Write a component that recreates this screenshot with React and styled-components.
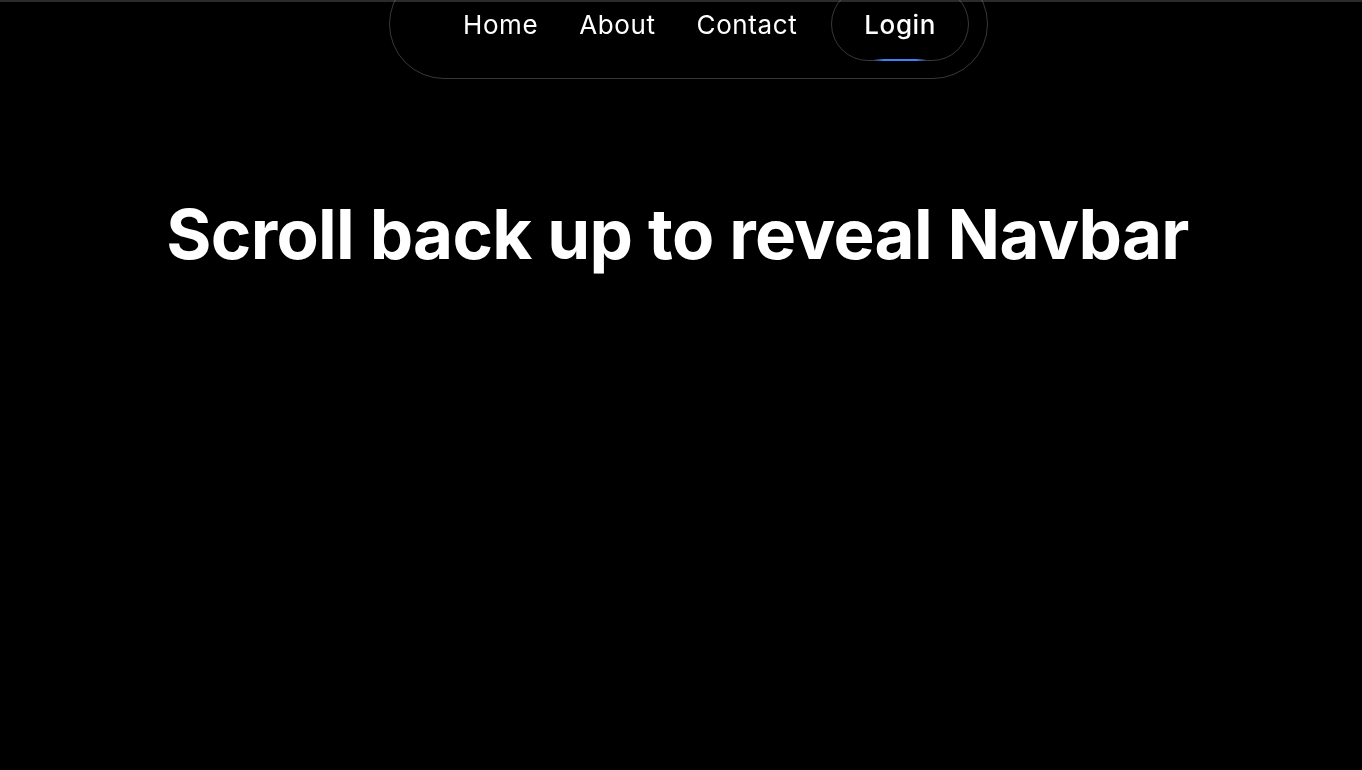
import React from 'react';
import styled, { createGlobalStyle } from 'styled-components';

const GlobalStyle = createGlobalStyle`
  html, body {
    margin: 0;
    padding: 0;
    background: #000;
    font-family: Inter, "Noto Sans", sans-serif;
    color: #fff;
  }
`;

const Page = styled.div`
  min-height: 770px;
  background: #000;
  border-top: 2px solid #2b2b2b;
  box-sizing: border-box;
`;

// navbar slid up (hidden state) - sits over page content
const NavWrap = styled.div`
  position: fixed;
  top: -31px;
  left: 0;
  right: 0;
  display: flex;
  justify-content: center;
  padding-left: 15px;
  z-index: 1;
`;

const Nav = styled.nav`
  width: 599px;
  height: 110px;
  box-sizing: border-box;
  border: 1px solid rgba(255, 255, 255, 0.22);
  border-radius: 55px;
  display: flex;
  align-items: center;
  padding: 0 18px 0 73px;
  gap: 41px;
`;

const NavLink = styled.a`
  font-size: 26px;
  color: #fff;
  text-decoration: none;
  letter-spacing: 0.6px;
`;

const LoginButton = styled.button`
  position: relative;
  margin-left: -7px;
  width: 140px;
  height: 74px;
  border-radius: 37px;
  border: 1px solid rgba(255, 255, 255, 0.22);
  background: transparent;
  color: #fff;
  font-family: inherit;
  font-size: 26px;
  font-weight: 500;
  letter-spacing: 0.6px;
  padding: 0;
  cursor: pointer;
`;

const Glow = styled.span`
  position: absolute;
  left: 30%;
  right: 30%;
  bottom: -1px;
  height: 2px;
  background: linear-gradient(90deg, transparent, #3b82f6 20%, #3b82f6 80%, transparent);
`;

const Hero = styled.main`
  display: flex;
  justify-content: center;
  padding-right: 7px;
  padding-top: 198px;
`;

const Title = styled.h1`
  margin: 0;
  font-size: 69px;
  font-weight: 700;
  letter-spacing: -0.7px;
  line-height: 1;
`;

const links = ['Home', 'About', 'Contact'];

export default function App() {
  return (
    <Page>
      <GlobalStyle />
      <NavWrap>
        <Nav>
          {links.map((l) => (
            <NavLink key={l} href="#">{l}</NavLink>
          ))}
          <LoginButton>
            Login
            <Glow />
          </LoginButton>
        </Nav>
      </NavWrap>
      <Hero>
        <Title>Scroll back up to reveal Navbar</Title>
      </Hero>
    </Page>
  );
}
